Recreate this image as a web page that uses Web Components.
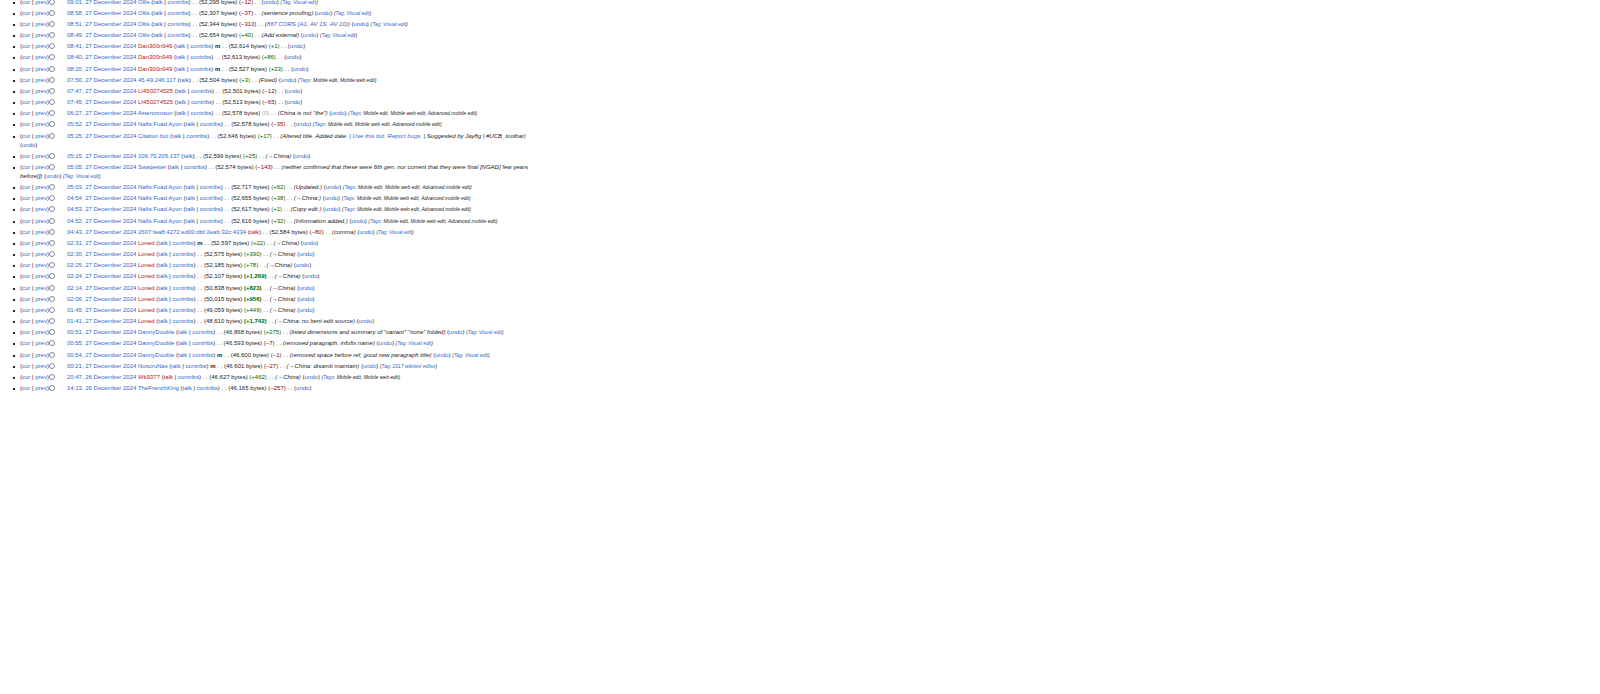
<!DOCTYPE html>
<html lang="en">
<head>
<meta charset="utf-8">
<title>Revision history</title>
<style>
  body {
    margin: 0;
    background-color: #fff;
    color: #202122;
    font-family: "Liberation Sans", Arial, sans-serif;
    font-size: 6px;
    line-height: 9px;
    --link: #3366cc;
    --new-link: #ba2014;
  }
</style>
</head>
<body>
<revision-history></revision-history>

<script>
class RevisionEntry extends HTMLElement {
  constructor() {
    super();
    this.attachShadow({ mode: 'open' });
  }

  connectedCallback() {
    this.render();
  }

  sizeClass(change) {
    const amount = parseInt(change.replace(',', '').replace('−', '-'), 10);
    const sign = amount > 0 ? 'pos' : amount < 0 ? 'neg' : 'null';
    return Math.abs(amount) >= 500 ? `${sign} big` : sign;
  }

  render() {
    const { time, day, user, bytes, change, minor, anon, red = '' } = this.dataset;
    const date = `${time}, ${day} December 2024`;
    this.shadowRoot.innerHTML = `
      <style>
        :host {
          display: grid;
          grid-template-columns: 2px 1fr;
          column-gap: 5px;
        }
        .bullet {
          height: 2px;
          margin-top: 4px;
          background-color: #202122;
        }
        a { color: var(--link); text-decoration: none; }
        a:hover { text-decoration: underline; }
        a.new { color: var(--new-link); }
        input {
          appearance: none;
          box-sizing: border-box;
          width: 6px;
          height: 6px;
          margin: 0 12px 0 0;
          border: 1px solid #8a8a8a;
          border-radius: 50%;
          vertical-align: -1px;
        }
        .pos { color: #006400; }
        .neg { color: #8b0000; }
        .null { color: #a2a9b1; }
        .big { font-weight: bold; }
        abbr { font-weight: bold; text-decoration: none; }
      </style>
      <span class="bullet"></span>
      <div>(<a href="#cur">cur</a> | <a href="#prev">prev</a>)<input type="radio" name="oldid" aria-label="${date}"><a href="#rev">${date}</a>
        <a class="${red.includes('user') ? 'new' : ''}" href="#user">${user}</a>
        (<a class="${red.includes('talk') ? 'new' : ''}" href="#talk">talk</a>${anon ? '' : ' | <a href="#contribs">contribs</a>'})
        ${minor ? '<abbr>m</abbr>' : ''} . . (${bytes} bytes) <span class="${this.sizeClass(change)}">(${change})</span> . .
        <slot name="comment"></slot>
        (<a href="#undo">undo</a>)
        <slot name="tags"></slot>
      </div>
    `;
  }
}

class EditComment extends HTMLElement {
  constructor() {
    super();
    this.attachShadow({ mode: 'open' }).innerHTML = `
      <style>
        :host { display: inline; font-style: italic; }
        ::slotted(a) { color: var(--link); text-decoration: none; }
      </style>(<slot></slot>)`;
  }
}

class EditTags extends HTMLElement {
  constructor() {
    super();
    this.attachShadow({ mode: 'open' });
  }

  connectedCallback() {
    const label = this.hasAttribute('many') ? 'Tags' : 'Tag';
    this.shadowRoot.innerHTML = `
      <style>
        :host { display: inline; font-style: italic; font-size: 5px; }
        a, ::slotted(a) { color: var(--link); text-decoration: none; }
      </style>(<a href="#tags">${label}</a>: <slot></slot>)`;
  }
}

const VISUAL = '<edit-tags slot="tags"><a href="#visual">Visual edit</a></edit-tags>';
const MOBILE = '<edit-tags slot="tags" many>Mobile edit, Mobile web edit</edit-tags>';
const ADVANCED = '<edit-tags slot="tags" many>Mobile edit, Mobile web edit, Advanced mobile edit</edit-tags>';
const WIKITEXT = '<edit-tags slot="tags"><a href="#wikitext">2017 wikitext editor</a></edit-tags>';

// time, user, bytes, change, comment, tags, extra
const REVISIONS = [
  ['09:01', 'Ollis', '52,295', '−12', '', VISUAL],
  ['08:58', 'Ollis', '52,307', '−37', 'sentence proofing', VISUAL],
  ['08:51', 'Ollis', '52,344', '−310', '<a href="#c">867 CORS (A1, AV 1S, AV 10)</a>', VISUAL],
  ['08:49', 'Ollis', '52,654', '+40', 'Add external', VISUAL],
  ['08:41', 'Dan300n949', '52,614', '+1', '', '', { red: 'user', minor: 1 }],
  ['08:40', 'Dan300n949', '52,613', '+86', '', '', { red: 'user' }],
  ['08:20', 'Dan300n949', '52,527', '+23', '', '', { red: 'user', minor: 1 }],
  ['07:50', '45.49.246.117', '52,504', '+3', 'Fixed', MOBILE, { anon: 1 }],
  ['07:47', 'LI450274525', '52,501', '−12', '', '', { red: 'user' }],
  ['07:45', 'LI450274525', '52,513', '−65', '', '', { red: 'user' }],
  ['06:27', 'Astercrimson', '52,578', '0', 'China is not "the"', ADVANCED],
  ['05:52', 'Nafis Fuad Ayon', '52,578', '−35', '', ADVANCED],
  ['05:25', 'Citation bot', '52,646', '+17', 'Altered title. Added date. | <a href="#bot">Use this bot</a>. <a href="#bugs">Report bugs</a>. | Suggested by Jay8g | #UCB_toolbar', ''],
  ['05:15', '106.70.205.137', '52,599', '+25', '→China', '', { anon: 1 }],
  ['05:05', 'Swatjester', '52,574', '−143', 'neither confirmed that these were 6th gen, nor current that they were final [NGAD] few years before]]', VISUAL],
  ['05:03', 'Nafis Fuad Ayon', '52,717', '+62', 'Updated.', ADVANCED],
  ['04:54', 'Nafis Fuad Ayon', '52,655', '+38', '→China:', ADVANCED],
  ['04:53', 'Nafis Fuad Ayon', '52,617', '+1', 'Copy edit.', ADVANCED],
  ['04:52', 'Nafis Fuad Ayon', '52,616', '+32', 'Information added.', ADVANCED],
  ['04:43', '2607:fea8:4272:ed00:dbf:2eab:32c:4334', '52,584', '−80', 'comma', VISUAL, { anon: 1, red: 'talk' }],
  ['02:31', 'Loned', '52,597', '+22', '→China', '', { red: 'user', minor: 1 }],
  ['02:30', 'Loned', '52,575', '+390', '→China', '', { red: 'user' }],
  ['02:25', 'Loned', '52,185', '+78', '→China', '', { red: 'user' }],
  ['02:24', 'Loned', '52,107', '+1,269', '→China', '', { red: 'user' }],
  ['02:14', 'Loned', '50,838', '+823', '→China', '', { red: 'user' }],
  ['02:06', 'Loned', '50,015', '+956', '→China', '', { red: 'user' }],
  ['01:45', 'Loned', '49,059', '+449', '→China', '', { red: 'user' }],
  ['01:41', 'Loned', '48,610', '+1,742', '→China: no bent edit source', '', { red: 'user' }],
  ['00:51', 'DannyDouble', '46,868', '+275', 'listed dimensions and summary of "variant" "none" folded', VISUAL],
  ['00:55', 'DannyDouble', '46,593', '−7', 'removed paragraph, infofix name', VISUAL],
  ['00:54', 'DannyDouble', '46,600', '−1', 'removed space before ref, good new paragraph title', VISUAL, { minor: 1 }],
  ['00:21', 'NuscruNas', '46,601', '−27', '→China: disamb maintain', WIKITEXT, { minor: 1 }],
  ['20:47', 'Wk9377', '46,627', '+462', '→China', MOBILE, { red: 'user talk', day: 26 }],
  ['14:13', 'TheFrenchKing', '46,165', '−257', '', '', { day: 26 }]
];

class RevisionHistory extends HTMLElement {
  constructor() {
    super();
    this.attachShadow({ mode: 'open' });
  }

  connectedCallback() {
    this.shadowRoot.innerHTML = `
      <style>
        :host {
          display: flex;
          flex-direction: column;
          box-sizing: border-box;
          width: 33.5%;
          margin-top: -2px;
          padding-left: 13px;
        }
        revision-entry { margin-bottom: 2px; }
        revision-entry:nth-of-type(6n) { margin-bottom: 3px; }
      </style>
      ${REVISIONS.map(row => this.entry(...row)).join('')}
    `;
  }

  entry(time, user, bytes, change, comment, tags, extra = {}) {
    const data = { time, user, bytes, change, day: 27, ...extra };
    const attrs = Object.entries(data).map(([key, value]) => `data-${key}="${value}"`).join(' ');
    return `<revision-entry ${attrs}>
      ${comment ? `<edit-comment slot="comment">${comment}</edit-comment>` : ''}${tags}
    </revision-entry>`;
  }
}

customElements.define('revision-entry', RevisionEntry);
customElements.define('edit-comment', EditComment);
customElements.define('edit-tags', EditTags);
customElements.define('revision-history', RevisionHistory);
</script>
</body>
</html>
